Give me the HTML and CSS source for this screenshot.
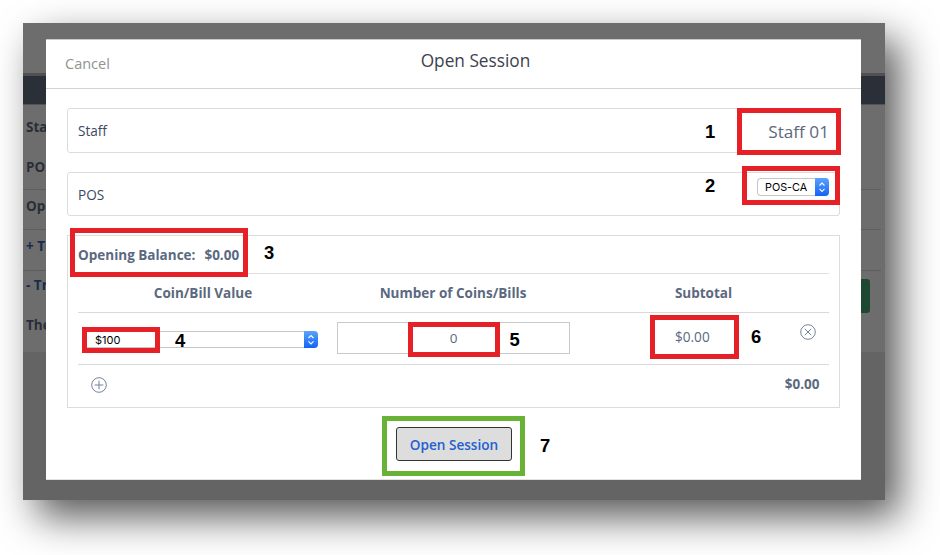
FILE: index.html
```html
<!DOCTYPE html>
<html lang="en">
<head>
<meta charset="utf-8">
<title>Open Session</title>
<link rel="stylesheet" href="styles.css">
</head>
<body>
<div class="window">
  <div class="page">
    <div class="page-top"></div>
    <div class="page-nav"></div>
    <div class="page-rows">
      <p>Staff</p>
      <p>POS</p>
      <p>Opening</p>
      <p class="link">+ Tran</p>
      <p class="link">- Tran</p>
      <p>There</p>
    </div>
    <i class="rule rule-a"></i><i class="rule rule-b"></i><i class="rule rule-c"></i>
    <i class="page-button"></i>
  </div>
  <section class="modal">
    <header class="modal-head">
      <span class="cancel">Cancel</span>
      <h1>Open Session</h1>
    </header>
    <div class="modal-body">
      <div class="field staff"><label>Staff</label><span class="staff-name">Staff 01</span></div>
      <div class="field pos"><label>POS</label>
        <span class="select pos-select"><span>POS-CA</span><b class="cap"><svg viewBox="0 0 14 17"><path d="M4.5 7 7 4.5l2.5 2.5M4.5 10.4 7 12.9l2.5-2.5"/></svg></b></span>
      </div>
      <div class="cash">
        <div class="balance"><span>Opening Balance:</span><span>$0.00</span></div>
        <div class="grid heads"><span>Coin/Bill Value</span><span>Number of Coins/Bills</span><span>Subtotal</span></div>
        <div class="grid entry">
          <span class="select bill-select"><span>$100</span><b class="cap"><svg viewBox="0 0 14 17"><path d="M4.5 7 7 4.5l2.5 2.5M4.5 10.4 7 12.9l2.5-2.5"/></svg></b></span>
          <span class="count">0</span>
          <span class="subtotal">$0.00</span>
          <svg class="icon remove" viewBox="0 0 16 16"><circle cx="8" cy="8" r="7.3"/><path d="m4.8 4.8 6.4 6.4m0-6.4-6.4 6.4"/></svg>
        </div>
        <div class="total">
          <svg class="icon" viewBox="0 0 16 16"><circle cx="8" cy="8" r="7.3"/><path d="M8 3.6v8.8M3.6 8h8.8"/></svg>
          <span>$0.00</span>
        </div>
      </div>
      <button class="open">Open Session</button>
    </div>
  </section>
</div>
<div class="mark m1"></div><div class="mark m2"></div><div class="mark m3"></div><div class="mark m4"></div>
<div class="mark m5"></div><div class="mark m6"></div><div class="mark m7"></div>
<span class="num n1">1</span><span class="num n2">2</span><span class="num n3">3</span><span class="num n4">4</span>
<span class="num n5">5</span><span class="num n6">6</span><span class="num n7">7</span>
</body>
</html>
```
FILE: styles.css
```css
* { box-sizing: border-box; }
body {
  margin: 0;
  width: 940px;
  height: 555px;
  overflow: hidden;
  padding: 23px;
  background: #fff;
  position: relative;
  font-family: "Open Sans", "Noto Sans", sans-serif;
  font-size: 13.5px;
  color: #5b6980;
}
.window {
  position: relative;
  width: 862px;
  height: 477px;
  background: #646464;
  box-shadow: 14px 17px 37px rgba(0, 0, 0, .66);
}
.page { position: relative; height: 329px; background: #6d6d6d; overflow: hidden; }
.page-top { height: 53px; border-bottom: 3px solid #505050; }
.page-nav { height: 44px; height: 29px; background: #2b2f38; border-bottom: 1px solid #505359; }
.page-rows { padding: 3px 3px; width: 100px; }
.page-rows p { margin: 0; height: 39.5px; line-height: 39.5px; font-weight: 700; color: #292e38; white-space: nowrap; }
.page-rows .link { color: #172c4e; }
.rule { position: absolute; left: 0; right: 4px; height: 1px; background: #5e5e5e; }
.rule-a { top: 166px; }
.rule-b { top: 206px; }
.rule-c { top: 247px; }
.page-button { position: absolute; left: 700px; top: 256px; width: 147px; height: 34px; border-radius: 3px; background: #1e4831; }

.modal { position: absolute; left: 23px; top: 16px; width: 815px; height: 441px; background: #fff; border-top: 1px solid #c9c9c9; border-bottom: 1px solid #e2e2e2; }
.modal-head { display: grid; grid-template-columns: 1fr auto 1fr; height: 49px; padding-left: 44px; border-bottom: 1px solid #d3d3d3; }
.modal-head h1 { margin: 0; font-size: 17.25px; font-weight: 400; line-height: 42px; color: #3b424e; }
.cancel { font-size: 14.5px; line-height: 48px; color: #8f9492; margin-left: -25px; }
.modal-body { padding: 19px 21px 0; }
.field { display: flex; justify-content: space-between; border: 1px solid #dcdcdc; border-radius: 3px; padding: 0 10px; width: 773px; }
.field label { color: #3c4860; font-size: 13.6px; line-height: 44px; }
.staff { height: 45px; }
.pos { height: 44px; margin-top: 19px; }
.staff-name { font-size: 17.2px; line-height: 45px; }
.select { display: flex; justify-content: space-between; height: 17px; border: 1px solid #c6c6c6; border-right: 0; border-radius: 4px; background: #fff; color: #000; font: 11px/16px Inter, "Liberation Sans", sans-serif; padding-left: 7px; }
.cap { width: 14px; height: 17px; margin-top: -1px; border-radius: 0 4px 4px 0; background: linear-gradient(#5ba4fa, #1163f7); }
.cap svg { display: block; width: 14px; height: 17px; fill: none; stroke: #fff; stroke-width: 1.1; }
.pos-select { width: 72px; margin-top: 5px; height: 18px; font-size: 10.8px; line-height: 18px; }
.pos-select .cap, .pos-select svg { height: 18px; }
.cash { width: 773px; height: 173px; margin-top: 19px; padding: 0 10px; border: 1px solid #dcdcdc; }
.balance { display: flex; gap: 9px; height: 38px; line-height: 39px; font-weight: 700; border-bottom: 1px solid #dfdfdf; }
.grid { display: grid; grid-template-columns: 250px 250px 251px; border-bottom: 1px solid #d9d9d9; position: relative; }
.heads { height: 39px; line-height: 39.5px; text-align: center; font-weight: 700; }
.entry { height: 52px; }
.bill-select { width: 236px; margin: 18px 0 0 4px; padding-left: 12px; }
.count { width: 233px; height: 32px; margin: 9px 0 0 9px; border: 1px solid #cacaca; text-align: center; line-height: 31px; }
.subtotal { padding-left: 97px; line-height: 48px; font-size: 13.6px; }
.icon { width: 16px; height: 16px; fill: none; stroke: #76839a; stroke-width: 1; }
.remove { position: absolute; right: 13px; top: 11px; }
.total { display: flex; justify-content: space-between; align-items: center; height: 40px; padding: 0 9.5px 0 13px; font-weight: 700; }
.total span { margin-top: -2px; }
.open { display: block; width: 116px; height: 34px; margin: 19px 0 0 329px; padding: 0; border: 1px solid #333; border-radius: 3px; background: #ddd; color: #2260d2; font: 600 13.6px/34px "Open Sans", sans-serif; }

.mark { position: absolute; border: 5px solid #e52027; }
.m1 { left: 737px; top: 108px; width: 104px; height: 47px; }
.m2 { left: 742px; top: 166px; width: 98px; height: 39px; }
.m3 { left: 70px; top: 228px; width: 178px; height: 49px; }
.m4 { left: 82px; top: 327px; width: 78px; height: 26px; }
.m5 { left: 408px; top: 322px; width: 92px; height: 35px; }
.m6 { left: 650px; top: 315px; width: 89px; height: 44px; }
.m7 { left: 382px; top: 416px; width: 143px; height: 60px; border-color: #68b236; }
.num { position: absolute; font: 700 18.4px/20px "Liberation Sans", sans-serif; color: #000; }
.n1 { left: 705px; top: 122px; }
.n2 { left: 705px; top: 176px; }
.n3 { left: 264px; top: 243px; }
.n4 { left: 175px; top: 331px; }
.n5 { left: 509.5px; top: 330px; }
.n6 { left: 751px; top: 327px; }
.n7 { left: 540px; top: 436px; }
```
